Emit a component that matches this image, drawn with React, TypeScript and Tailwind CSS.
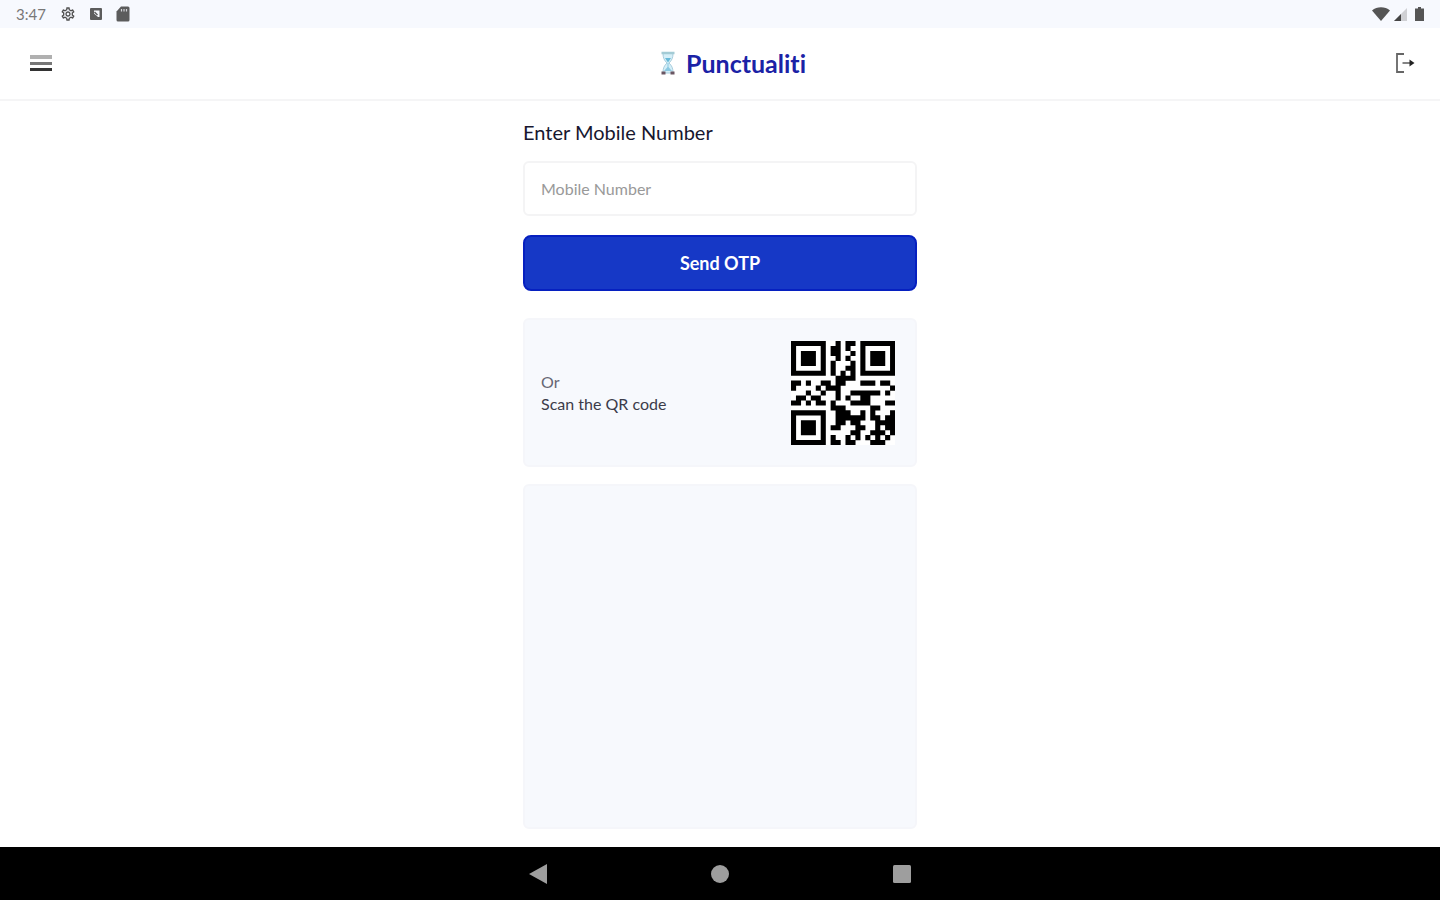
import { type FormEvent, useState } from 'react'
import { MdOutlineSettings } from 'react-icons/md'

const QR_ROWS = [
  '#######..#.##.#######',
  '#.....#.##.#..#.....#',
  '#.###.#.##..#.#.###.#',
  '#.###.#..#.#..#.###.#',
  '#.###.#.#...#.#.###.#',
  '#.....#.#..##.#.....#',
  '#######.#.#.#.#######',
  '.........####........',
  '##.#..##.##...###.##.',
  '#....#.###..........#',
  '...#..#..#..######.#.',
  '.##.##...#.#..##.....',
  '##.#.##.#...####...##',
  '........###.....##...',
  '#######..###..#.#...#',
  '#.....#..######.##.##',
  '#.###.#..##.##...####',
  '#.###.#.##...##..#.##',
  '#.###.#.....##..###.#',
  '#.....#.#..#.#.#.#.#.',
  '#######.##.##...###..'
]

const QrCode = () => (
  <svg viewBox="0 0 21 21" className="w-[104px] h-[104px]" role="img" aria-label="QR code">
    <rect width="21" height="21" fill="#fff" />
    <path
      fill="#000"
      d={QR_ROWS.map((row, y) =>
        row.split('').map((cell, x) => (cell === '#' ? `M${x} ${y}h1.03v1.03h-1.03z` : '')).join('')
      ).join('')}
    />
  </svg>
)

const StatusBar = () => (
  <div className="h-7 px-4 flex items-center justify-between bg-[#f7f9fe] text-[#5c5c5c]">
    <div className="flex items-center gap-3.5">
      <span className="text-[15px] text-[#777]">3:47</span>
      <MdOutlineSettings className="w-4 h-4 text-[#505050]" />
      <svg viewBox="0 0 12 12" className="w-3 h-3" fill="none">
        <rect width="12" height="12" rx="1" fill="currentColor" />
        <path d="M4 2.500h5.500V9H8L4 5.500z" fill="#f7f9fe" />
        <path d="M4.500 4l3 3" stroke="currentColor" strokeWidth="1.400" />
      </svg>
      <svg viewBox="0 0 14 15" className="w-3.5 h-4">
        <path d="M5 0h7a1.500 1.500 0 0 1 1.500 1.500v12A1.500 1.500 0 0 1 12 15H2a1.500 1.500 0 0 1-1.500-1.500V5z" fill="currentColor" />
        <path d="M5.500 2.500v2.500M8 2.500v2.500M10.500 2.500v2.500" stroke="#d5d6da" strokeWidth="1.200" />
      </svg>
    </div>
    <div className="flex items-center gap-1">
      <svg viewBox="0 0 18 14" className="w-[18px] h-3.5" fill="#555">
        <path d="M0 3.500C5 -.8 13 -.8 18 3.500L9 14z" />
      </svg>
      <svg viewBox="0 0 13 13" className="w-[13px] h-[13px]">
        <path d="M13 0v13H0z" fill="#cfd0d4" />
        <path d="M7 6v7H0z" fill="#444" />
      </svg>
      <svg viewBox="0 0 9 14" className="w-[9px] h-3.5 ml-1" fill="#555">
        <path d="M3 0h3v1.500h3V14H0V1.500h3z" />
      </svg>
    </div>
  </div>
)

const Header = () => (
  <header className="h-[73px] pl-[30px] pr-6 pb-0.5 flex items-center justify-between bg-white border-b-2 border-[#f5f5f6]">
    <div className="flex-1 flex">
      <button type="button" aria-label="Menu">
        <svg viewBox="0 0 22 18" className="w-[22px] h-[18px]">
          <path d="M0 3h22" stroke="#b0b0b0" strokeWidth="4" />
          <path d="M0 9.500h22" stroke="#777" strokeWidth="3" />
          <path d="M0 15.500h22" stroke="#333" strokeWidth="3" />
        </svg>
      </button>
    </div>
    <div className="ml-5 flex items-center gap-2.5">
      <svg viewBox="0 0 16 24" className="w-4 h-6">
        <path d="M3 2h10c0 5-1 7-4 10 3 3 4 5 4 10H3c0-5 1-7 4-10-3-3-4-5-4-10z" fill="#d5eff8" stroke="#a9cddd" />
        <path d="M5 7h6l-3 4.500z" fill="#67b9d8" />
        <path d="M7.500 12h1v4l3.500 4H4l3.500-4z" fill="#8cc9e2" />
        <path d="M1.500 2h13" stroke="#a3cbd5" strokeWidth="2.500" />
        <path d="M1.500 22h4M10.500 22h4" stroke="#6b5663" strokeWidth="3" />
      </svg>
      <h1 className="text-[25px] leading-7 font-bold text-[#1b22a6] [font-variant-ligatures:none]">Punctualiti</h1>
    </div>
    <div className="flex-1 flex justify-end">
      <button type="button" aria-label="Log out">
        <svg viewBox="0 0 22 20" className="w-[22px] h-5" fill="none">
          <path d="M10 1H3v18h7" stroke="#666" strokeWidth="1.800" />
          <path d="M8.500 10H18" stroke="#777" strokeWidth="1.800" />
          <path d="M15.500 6.500L20.500 10l-5 3.500z" fill="#222" />
        </svg>
      </button>
    </div>
  </header>
)

const NavigationBar = () => (
  <nav className="h-[53px] bg-black flex items-center justify-center gap-[164px]">
    <button type="button" aria-label="Back">
      <svg viewBox="0 0 18 20" className="w-[18px] h-5">
        <path d="M18 0v20L0 10z" fill="#9e9e9e" />
      </svg>
    </button>
    <button type="button" aria-label="Home">
      <svg viewBox="0 0 18 18" className="w-[18px] h-[18px]">
        <circle cx="9" cy="9" r="9" fill="#9e9e9e" />
      </svg>
    </button>
    <button type="button" aria-label="Recent apps">
      <svg viewBox="0 0 18 18" className="w-[18px] h-[18px]">
        <rect width="18" height="18" rx="1.500" fill="#9e9e9e" />
      </svg>
    </button>
  </nav>
)

const App = () => {
  const [mobile, setMobile] = useState('')

  const handleSubmit = (e: FormEvent<HTMLFormElement>) => {
    e.preventDefault()
  }

  return (
    <div className="min-h-screen flex flex-col bg-white font-['Lato',sans-serif]">
      <StatusBar />
      <Header />
      <main className="flex-1 w-full max-w-[394px] mx-auto pt-[19px] pb-[18px] flex flex-col">
        <form onSubmit={handleSubmit} className="flex flex-col">
          <label htmlFor="mobile" className="text-xl leading-6 text-[#17172f]">
            Enter Mobile Number
          </label>
          <input
            type="tel"
            id="mobile"
            name="mobile"
            value={mobile}
            onChange={e => setMobile(e.target.value)}
            placeholder="Mobile Number"
            className="mt-[17px] h-[55px] px-4 border-2 border-[#f4f4f5] rounded-md text-base text-[#17172f] placeholder:text-[#999] outline-none"
          />
          <button
            type="submit"
            className="mt-[19px] h-14 rounded-lg bg-[#1638c6] border-2 border-[#0620c0] text-lg font-bold text-white"
          >
            Send OTP
          </button>
        </form>

        <section className="mt-[27px] h-[149px] pl-4 pr-5 flex items-center justify-between rounded-md bg-[#f7f9fd] border-2 border-[#f5f6fa]">
          <div className="text-base leading-[22px] text-[#3c3c4a]">
            <p className="text-[#666674]">Or</p>
            <p>Scan the QR code</p>
          </div>
          <QrCode />
        </section>

        <section className="mt-[17px] flex-1 rounded-md bg-[#f7f9fd] border-2 border-[#f5f6fa]" />
      </main>
      <NavigationBar />
    </div>
  )
}

export default App
